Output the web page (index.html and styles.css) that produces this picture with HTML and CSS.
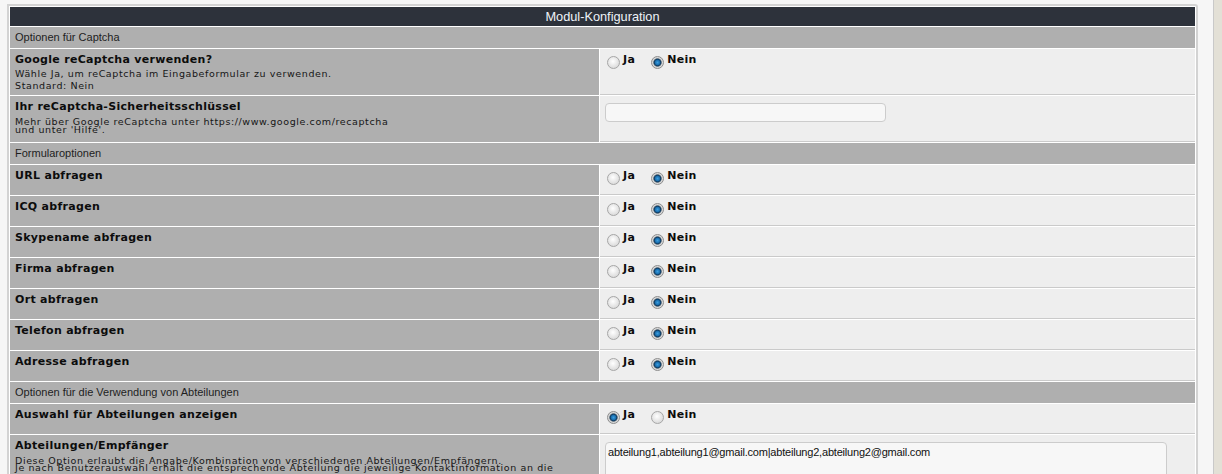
FILE: index.html
```html
<!DOCTYPE html>
<html lang="de">
<head>
<meta charset="utf-8">
<title>Modul-Konfiguration</title>
<link rel="stylesheet" href="styles.css">
</head>
<body>
<div class="page">
  <main class="main">
    <div class="config">
      <div class="head">Modul-Konfiguration</div>

      <div class="section">Optionen für Captcha</div>

      <div class="label tall">
        <div class="title">Google reCaptcha verwenden?</div>
        <div class="desc d12">Wähle Ja, um reCaptcha im Eingabeformular zu verwenden.<br>Standard: Nein</div>
      </div>
      <div class="value">
        <label class="opt"><span class="radio"></span>Ja</label>
        <label class="opt"><span class="radio on"></span>Nein</label>
      </div>

      <div class="label tall">
        <div class="title">Ihr reCaptcha-Sicherheitsschlüssel</div>
        <div class="desc d8">Mehr über Google reCaptcha unter https://www.google.com/recaptcha<br>und unter 'Hilfe'.</div>
      </div>
      <div class="value field">
        <input class="text" type="text" value="">
      </div>

      <div class="section">Formularoptionen</div>

      <div class="label"><div class="title">URL abfragen</div></div>
      <div class="value">
        <label class="opt"><span class="radio"></span>Ja</label>
        <label class="opt"><span class="radio on"></span>Nein</label>
      </div>

      <div class="label"><div class="title">ICQ abfragen</div></div>
      <div class="value">
        <label class="opt"><span class="radio"></span>Ja</label>
        <label class="opt"><span class="radio on"></span>Nein</label>
      </div>

      <div class="label"><div class="title">Skypename abfragen</div></div>
      <div class="value">
        <label class="opt"><span class="radio"></span>Ja</label>
        <label class="opt"><span class="radio on"></span>Nein</label>
      </div>

      <div class="label"><div class="title">Firma abfragen</div></div>
      <div class="value">
        <label class="opt"><span class="radio"></span>Ja</label>
        <label class="opt"><span class="radio on"></span>Nein</label>
      </div>

      <div class="label"><div class="title">Ort abfragen</div></div>
      <div class="value">
        <label class="opt"><span class="radio"></span>Ja</label>
        <label class="opt"><span class="radio on"></span>Nein</label>
      </div>

      <div class="label"><div class="title">Telefon abfragen</div></div>
      <div class="value">
        <label class="opt"><span class="radio"></span>Ja</label>
        <label class="opt"><span class="radio on"></span>Nein</label>
      </div>

      <div class="label"><div class="title">Adresse abfragen</div></div>
      <div class="value">
        <label class="opt"><span class="radio"></span>Ja</label>
        <label class="opt"><span class="radio on"></span>Nein</label>
      </div>

      <div class="section">Optionen für die Verwendung von Abteilungen</div>

      <div class="label"><div class="title">Auswahl für Abteilungen anzeigen</div></div>
      <div class="value">
        <label class="opt"><span class="radio on"></span>Ja</label>
        <label class="opt"><span class="radio"></span>Nein</label>
      </div>

      <div class="label tall">
        <div class="title">Abteilungen/Empfänger</div>
        <div class="desc d8b">Diese Option erlaubt die Angabe/Kombination von verschiedenen Abteilungen/Empfängern.<br>Je nach Benutzerauswahl erhält die entsprechende Abteilung die jeweilige Kontaktinformation an die</div>
      </div>
      <div class="value field">
        <textarea class="area">abteilung1,abteilung1@gmail.com|abteilung2,abteilung2@gmail.com</textarea>
      </div>
    </div>
  </main>
  <aside class="strip"></aside>
</div>
</body>
</html>
```

FILE: styles.css
```css
html, body {
  margin: 0;
  padding: 0;
  height: 100%;
  overflow: hidden;
  background: #f6f6f6;
}

.page {
  display: flex;
  min-height: 100%;
}

.main {
  flex: 1;
  padding: 4px 15px 0 7px;
}

.strip {
  width: 8px;
  border-left: 1px solid #c9c9c9;
  background: #e3e0d6;
}

.config {
  display: grid;
  grid-template-columns: 589px 1fr;
  gap: 1px;
  padding: 1px;
  background: #ffffff;
  border: 2px solid #d3d3d3;
  border-radius: 0 3px 0 0;
}

.head {
  grid-column: 1 / -1;
  height: 19px;
  line-height: 19px;
  background: #2d323b;
  color: #eef3f8;
  text-align: center;
  font-family: "Liberation Sans", Arial, sans-serif;
  font-size: 12.75px;
}

.section {
  grid-column: 1 / -1;
  height: 21px;
  line-height: 21px;
  padding-left: 5px;
  background: #afafaf;
  color: #1e1e1e;
  font-family: "Liberation Sans", Arial, sans-serif;
  font-size: 11px;
}

.label {
  background: #afafaf;
  min-height: 30px;
  box-sizing: border-box;
  padding: 5px 5px 0;
}

.label.tall {
  min-height: 46px;
}

.title {
  font-family: "DejaVu Sans", Verdana, sans-serif;
  font-weight: bold;
  font-size: 11px;
  letter-spacing: 0.3px;
  line-height: 12px;
  color: #0c0c0c;
}

.desc {
  font-family: "DejaVu Sans", Verdana, sans-serif;
  font-size: 9.5px;
  letter-spacing: 0.6px;
  color: #161616;
}

.d12 { line-height: 12px; margin-top: 2px; }
.d8 { line-height: 8px; margin-top: 5px; }
.d8b { line-height: 7px; margin-top: 5px; }

.value {
  background: #eeeeee;
  border-bottom: 1px solid #cacaca;
  box-sizing: border-box;
  padding: 5px 8px 0 7px;
  font-family: "DejaVu Sans", Verdana, sans-serif;
  font-weight: bold;
  font-size: 11px;
  letter-spacing: 0.3px;
  line-height: 12px;
  color: #0c0c0c;
}

.value.field {
  padding: 7px 5px 0;
}

.opt {
  display: inline-block;
}

.opt + .opt {
  margin-left: 12px;
}

.radio {
  display: inline-block;
  width: 13px;
  height: 13px;
  box-sizing: border-box;
  margin-right: 3px;
  vertical-align: -6px;
  border-radius: 50%;
  border: 1px solid #a6a6a6;
  background: radial-gradient(circle at 45% 40%, #ffffff 0, #eeeeee 35%, #cfcfcf 100%);
}

.radio.on {
  border-color: #8d8d8d;
  background: radial-gradient(circle at 50% 50%, #3a9ee0 0, #1b6fae 2.3px, #0e3a60 3.3px, #6d7c88 4px, #dcdcdc 4.6px, #c4c4c4 100%);
}

.text {
  display: block;
  width: 281px;
  height: 19px;
  box-sizing: border-box;
  margin: 0;
  border: 1px solid #cccccc;
  border-radius: 4px;
  background: #f7f7f7;
  padding: 0 3px;
  font-family: "Liberation Sans", Arial, sans-serif;
  font-size: 11px;
  outline: none;
}

.area {
  display: block;
  width: 562px;
  height: 70px;
  box-sizing: border-box;
  margin: 0;
  border: 1px solid #cccccc;
  border-radius: 4px;
  background: #f7f7f7;
  padding: 3px 2px;
  font-family: "Liberation Sans", Arial, sans-serif;
  font-size: 11px;
  letter-spacing: -0.2px;
  line-height: 13px;
  color: #111;
  resize: none;
  outline: none;
}
```
